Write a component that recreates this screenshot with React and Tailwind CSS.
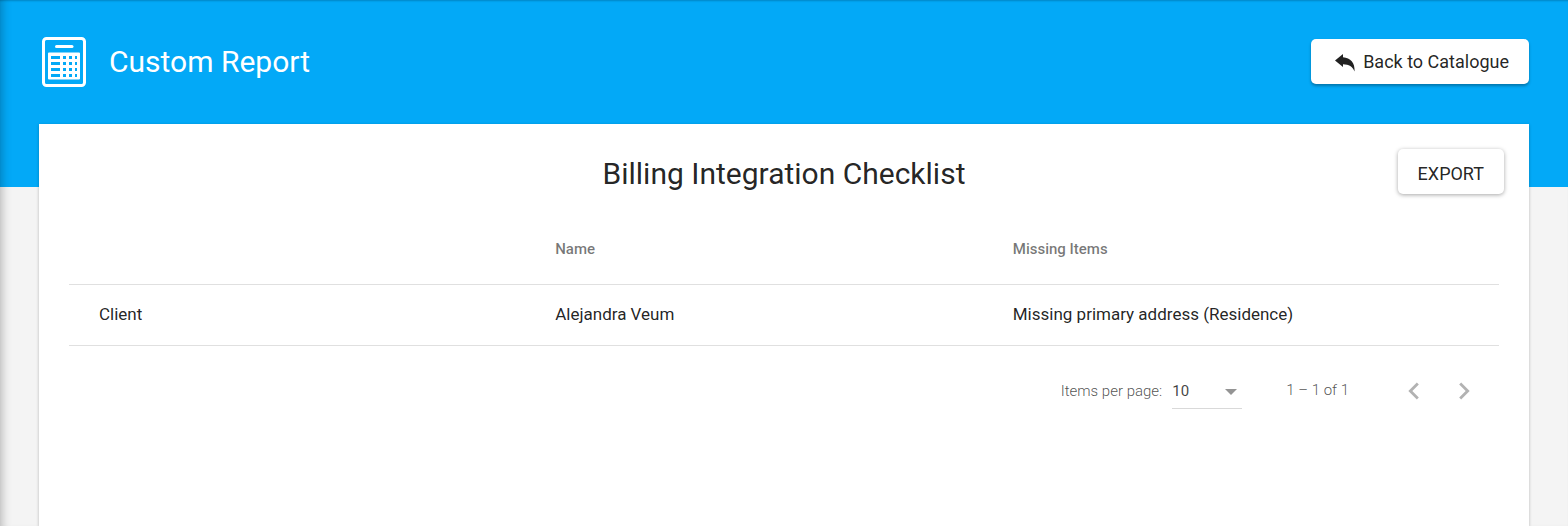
import React from "react";

const rows = [
  { type: "Client", name: "Alejandra Veum", missing: "Missing primary address (Residence)" },
];

function ReportIcon() {
  return (
    <svg className="h-[50px] w-[44px] shrink-0" viewBox="0 0 44 50" fill="none" aria-hidden="true">
      <rect x="1.5" y="1.5" width="41" height="47" rx="3" stroke="#fff" strokeWidth="3" />
      <path d="M14.5 9.500H30" stroke="#fff" strokeWidth="3" strokeLinecap="round" />
      <path
        fill="#fff"
        fillRule="evenodd"
        d="M7 15.500h30a1 1 0 0 1 1 1v25a1 1 0 0 1-1 1h-30a1 1 0 0 1-1-1v-25a1 1 0 0 1 1-1z
        M9 19h9v3h-9z M21 19h3v3h-3z M27 19h3v3h-3z M33 19h2v3h-2z
        M9 25h9v3h-9z M21 25h3v3h-3z M27 25h3v3h-3z M33 25h2v3h-2z
        M9 31h9v3h-9z M21 31h3v3h-3z M27 31h3v3h-3z M33 31h2v3h-2z
        M9 37h9v3h-9z M21 37h3v3h-3z M27 37h3v3h-3z M33 37h2v3h-2z"
      />
    </svg>
  );
}

function BackArrow() {
  return (
    <svg className="mt-0.5 h-[18px] w-5 shrink-0" viewBox="0 0 20 18" fill="currentColor" aria-hidden="true">
      <path d="M0 6.500 8 0v3.200C15.500 3.800 20 8.500 19.600 17.500 17.500 12.500 14 10.300 8 10.200V13z" />
    </svg>
  );
}

function Chevron({ d }) {
  return (
    <svg className="size-[34px]" viewBox="0 0 24 24" fill="currentColor" aria-hidden="true">
      <path d={d} />
    </svg>
  );
}

function Paginator() {
  return (
    <div className="flex items-center justify-end pt-5 pr-2.5 text-[15px] leading-5 font-light text-black/70">
      <label htmlFor="page-size">Items per page:</label>
      <div className="relative ml-2.5 w-[70px] border-b border-black/15 pt-[9px] pb-[7px]">
        <select
          id="page-size"
          defaultValue="10"
          className="block w-full appearance-none bg-transparent font-normal text-black/75 outline-none"
        >
          <option>10</option>
          <option>25</option>
          <option>50</option>
        </select>
        <svg
          className="pointer-events-none absolute top-[17px] right-[5px] h-1.5 w-3"
          viewBox="0 0 12 6"
          fill="#949494"
          aria-hidden="true"
        >
          <path d="M0 0h12L6 6z" />
        </svg>
      </div>
      <span className="mr-10 ml-11 pb-0.5">1 – 1 of 1</span>
      <div className="flex text-black/30">
        <button type="button" aria-label="Previous page" className="flex size-[50px] items-center justify-center">
          <Chevron d="M15.410 7.410 14 6l-6 6 6 6 1.410-1.410L10.830 12z" />
        </button>
        <button type="button" aria-label="Next page" className="flex size-[50px] items-center justify-center">
          <Chevron d="M10 6 8.590 7.410 13.170 12l-4.580 4.590L10 18l6-6z" />
        </button>
      </div>
    </div>
  );
}

export default function App() {
  return (
    <div className="flex min-h-screen flex-col bg-[linear-gradient(#03a9f7_187px,#f4f4f4_187px)] px-[39px] font-['Roboto',sans-serif] text-black/87 shadow-[inset_10px_0_10px_-8px_rgba(0,0,0,0.25),inset_0_2px_2px_-1px_rgba(0,0,0,0.2)]">
      <header className="flex h-[124px] items-center justify-between pb-px">
        <div className="flex items-center gap-[23px] pl-[3px] text-white">
          <ReportIcon />
          <h1 className="text-[30px] leading-9">Custom Report</h1>
        </div>
        <button
          type="button"
          className="flex h-[45px] items-center gap-2 rounded-[5px] bg-white pr-5 pl-6 text-[18px] shadow-[0_2px_3px_rgba(0,0,0,0.3)]"
        >
          <BackArrow />
          Back to Catalogue
        </button>
      </header>

      <main className="flex-1 bg-white px-[30px] shadow-[0_1px_3px_rgba(0,0,0,0.25)]">
        <div className="-mr-[5px] grid grid-cols-[1fr_auto_1fr] items-center pt-[25px]">
          <h2 className="col-start-2 pt-1 pr-[5px] text-[30px] leading-10 font-normal">Billing Integration Checklist</h2>
          <button
            type="button"
            className="h-[45px] justify-self-end rounded-[5px] bg-white px-5 pt-1 text-[18px] shadow-[0_1px_4px_rgba(0,0,0,0.35)]"
          >
            EXPORT
          </button>
        </div>

        <table className="mt-5 w-full table-fixed border-collapse text-left">
          <thead>
            <tr className="h-[70px] border-b border-black/12 text-[15px] text-black/54">
              <th className="w-[34%] pl-[30px]" aria-label="Type"></th>
              <th className="w-[32%] font-medium">Name</th>
              <th className="w-[34%] font-medium">Missing Items</th>
            </tr>
          </thead>
          <tbody>
            {rows.map((row) => (
              <tr key={row.name} className="h-[61px] border-b border-black/12 text-[17px]">
                <td className="pl-[30px]">{row.type}</td>
                <td>{row.name}</td>
                <td>{row.missing}</td>
              </tr>
            ))}
          </tbody>
        </table>

        <Paginator />
      </main>
    </div>
  );
}
